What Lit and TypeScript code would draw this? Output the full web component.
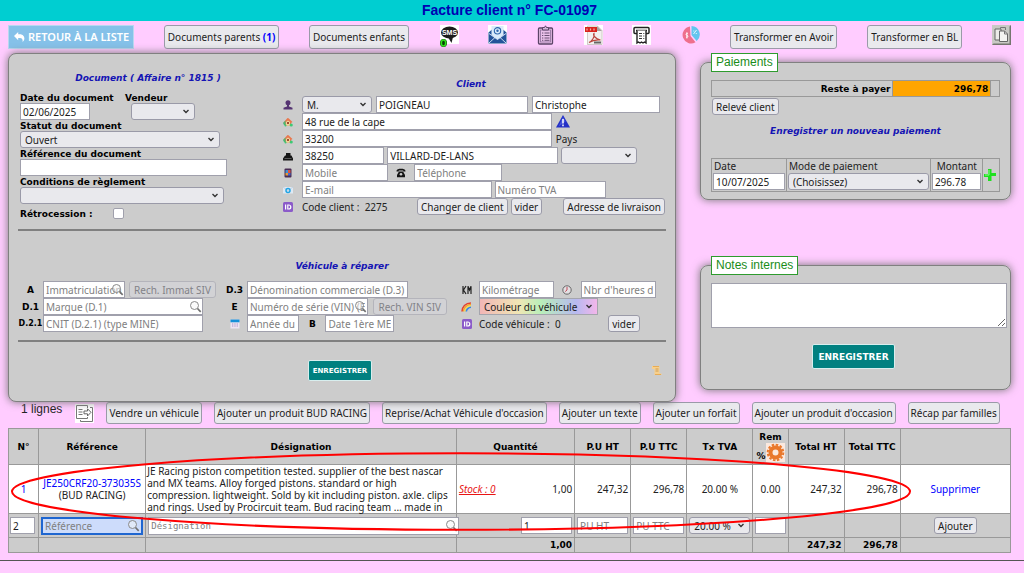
import { LitElement, html, svg, css, nothing } from "lit";
import { customElement, property } from "lit/decorators.js";

const icon = (w: number, h: number, body: unknown, cls = "") =>
  html`<svg class="ico ${cls}" width=${w} height=${h} viewBox="0 0 ${w} ${h}" aria-hidden="true">${body}</svg>`;

const icons = {
  back: () => icon(11, 10, svg`<path d="M0 4L4.2 0v2.3h1.6C9 2.3 10.4 4.600 10.4 6.600c0 1.500-.8 2.600-1.900 3.300.6-2.300-.2-4-2.700-4H4.200v2.300z" fill="#fff"/>`),
  sms: () => icon(20, 22, svg`<rect x="1" y="0" width="19" height="19" fill="#fff"/><ellipse cx="10.500" cy="7.500" rx="8.500" ry="6" fill="#1c1c1c"/><path d="M9 12l3.500 6 1.500-6z" fill="#1c1c1c"/><text x="10.500" y="10" text-anchor="middle" class="sms">SMS</text><ellipse cx="4.500" cy="18" rx="3.500" ry="4" fill="#0b3d05"/><ellipse cx="4.500" cy="18" rx="2.200" ry="3" fill="none" stroke="#2fe61d" stroke-width="1.600"/>`),
  mail: () => icon(19, 19, svg`<rect width="19" height="19" fill="#fff"/><path d="M.5 7.500L4 4.500h11l3.500 3V18.500H.5z" fill="#24549a"/><path d="M3.500 1h12v9l-6 4.500-6-4.500z" fill="#d9ebfa"/><circle cx="9.500" cy="5.800" r="3.200" fill="none" stroke="#2c66ad" stroke-width="1.100"/><circle cx="9.500" cy="5.800" r="1.200" fill="#2c66ad"/><path d="M1 18l6.500-6M18 18l-6.500-6M1 8.500l8.500 6 8.500-6" stroke="#dceafa" stroke-width=".9" fill="none"/>`),
  clip: () => icon(17, 20, svg`<rect x="1.500" y="3" width="14" height="16" rx="1" fill="#eac0ea" stroke="#5c4468" stroke-width="1.300"/><rect x="3.500" y="5" width="10" height="12" fill="none" stroke="#8d6f9b" stroke-width=".8"/><path d="M5.500 5V2.500h2L8.500.8 9.500 2.500h2V5z" fill="#d6b3dc" stroke="#5c4468" stroke-width="1"/><path d="M5 8h1.300M5 10.500h1.300M5 13h1.300M5 15.300h1.300M7.500 8h5M7.500 10.500h5M7.500 13h5M7.500 15.300h5" stroke="#5c4468" stroke-width=".9"/>`),
  pdf: () => icon(19, 20, svg`<rect width="19" height="20" fill="#fff"/><path d="M3.500 1h10l4.500 4.500v14H3.500z" fill="#f2f0ef" stroke="#c6bebc" stroke-width=".8"/><path d="M13 1v5h5z" fill="#a9a2a0"/><rect x="1" y="2" width="12" height="5" fill="#d9241d"/><path d="M3 3.500v2M6.500 3.500v2M10 3.500v2" stroke="#f7b3ae" stroke-width="1.200"/><path d="M5 17.500c3-1.500 6-5.500 5-9-1.500 1 1 5.500 6.500 6.500-4-.500-7.500 0-11.500 2.500z" fill="none" stroke="#b9463e" stroke-width="1.200"/><path d="M10 17.500h7" stroke="#666" stroke-width="2"/>`),
  print: () => icon(19, 20, svg`<rect width="19" height="20" fill="#fff"/><rect x="2" y="2.500" width="15" height="6" rx="1" fill="#fff" stroke="#222" stroke-width="1.500"/><path d="M4 5.500h11" stroke="#222" stroke-width="1.500"/><path d="M5 5.500v12.500l1.500-1 1.500 1 1.500-1 1.500 1 1.500-1L14 18V5.500" fill="#fff" stroke="#222" stroke-width="1.400"/><path d="M7 8.500h3M7 11h3M7 13.500h3M11.300 8.500h1M11.300 11h1M11.300 13.500h1" stroke="#333" stroke-width="1"/>`),
  pie: () => icon(19, 20, svg`<path d="M9 1.500a8.500 8.500 0 1 0 5.500 15.700L9.500 11z" fill="#ee6f8d"/><path d="M10.500 1v9l5.200 6A8.500 8.500 0 0 0 10.500 1z" fill="#63c5ee"/><path d="M6.800 8.500c-2-.6-2.400 1.600-.8 1.900s1.200 2.300-1 1.700M5.900 7.200v6.300" stroke="#fff" stroke-width=".9" fill="none"/><path d="M12.500 9l3-4M12.300 6h1M14.800 8.500h1" stroke="#e4f6fd" stroke-width="1"/>`),
  copy: () => icon(19, 20, svg`<rect width="19" height="20" fill="#c9c9c4"/><path d="M19 0v20H0l1.500-1.500h16V1.500z" fill="#75756f"/><path d="M3 4h6v11H3z" fill="#ecece8" stroke="#666" stroke-width="1"/><path d="M7.500 6h5l3 3v7.500h-8z" fill="#f4f4f1" stroke="#666" stroke-width="1"/><path d="M12.500 6v3h3M8.500 4V2.500h5V5" fill="none" stroke="#777"/>`),
  user: () => icon(10, 10, svg`<circle cx="5" cy="2.800" r="2.500" fill="#553472"/><path d="M4 4.500h2v2l3.500 1.200V9.500H.5V7.700L4 6.500z" fill="#553472"/>`),
  home: () => icon(10, 10, svg`<path d="M.5 5.500L4.500 1l1 .2L9.500 5 8 6v2.500H2.500z" fill="#e9784e"/><path d="M0 6l2.500-2.500v5L1 8z" fill="#48b973"/><path d="M3 5l2-1.500L7 5v3.500H3z" fill="#f0d59a"/><path d="M4 5h2v2H4z" fill="#a44a32"/><circle cx="8.200" cy="8" r="1.600" fill="#3dc974"/><circle cx="2.500" cy="8.500" r="1" fill="#3dc974"/>`),
  city: () => icon(10, 10, svg`<path d="M3 2h4.500v2.500h1L10 7.500v2H0v-2l2-3h1z" fill="#151515"/><path d="M1.500 7.500h7" stroke="#777" stroke-width=".7"/>`),
  mobile: () => icon(10, 10, svg`<rect x="1.500" y=".5" width="7" height="9" rx="1" fill="#4a2c55"/><path d="M2.500 2h2.500v3H2.500z" fill="#3d8fd6"/><path d="M5 2h2.500v3H5z" fill="#e0533a"/><path d="M2.500 5H5v2.500H2.500z" fill="#e79a35"/><path d="M5 5h2.500v2.500H5z" fill="#4467cc"/>`),
  phone: () => icon(10, 10, svg`<path d="M.5 3.500C.5 1 3 .8 5 .8s4.500.2 4.500 2.700H7.200V2.600H2.800v.9z" fill="#151515"/><path d="M3 3.500h4L9 7v2.300H1V7z" fill="#151515"/><circle cx="5" cy="6.300" r="1.300" fill="#ccc"/>`),
  email: () => icon(10, 10, svg`<path d="M0 2h10v6.500H0z" fill="#dfe9f3"/><path d="M0 2l5 3.500L10 2" stroke="#b1c5da" fill="none" stroke-width=".7"/><circle cx="5" cy="5.600" r="2" fill="none" stroke="#22a4e4" stroke-width="1.500"/>`),
  id: () => icon(10, 10, svg`<rect width="10" height="10" rx="1.500" fill="#8b5bc9"/><path d="M2.600 2.500v5M4.800 3v4h1a2 2 0 0 0 0-4z" stroke="#fff" stroke-width="1.200" fill="none"/>`),
  warn: () => icon(14, 13, svg`<path d="M7 0l7 12.500H0z" fill="#2430c6"/><path d="M7 2l2.500 4.500-7 5z" fill="#5b6cf0" opacity=".6"/><path d="M7 4v4.500M7 9.600v1.600" stroke="#fff" stroke-width="1.500"/>`),
  calendar: () => icon(10, 10, svg`<rect x=".5" y=".5" width="9" height="9" fill="#eee6f4"/><rect x=".5" y=".5" width="9" height="2.800" fill="#1690d8"/><path d="M2 5h6M2 7h6" stroke="#a890c5" stroke-width="1" stroke-dasharray="1 .7"/>`),
  km: () => icon(10, 10, svg`<path d="M1 1v8M4 1L1.500 5 4 9M6 9V1.200L7.500 5 9 1.200V9" stroke="#222" stroke-width="1.200" fill="none"/>`),
  clock: () => icon(10, 10, svg`<circle cx="5" cy="5" r="4.200" fill="#e2dfe2" stroke="#666" stroke-width="1"/><path d="M5 2v3L3.200 6.600" stroke="#c13a4a" stroke-width=".9" fill="none"/>`),
  rainbow: () => icon(11, 10, svg`<path d="M1 9.500C1 5 4.500 1 10 1" stroke="#e4402f" stroke-width="1.500" fill="none"/><path d="M2.500 9.500C2.500 6 5.500 2.500 10 2.500" stroke="#f6a12d" stroke-width="1.500" fill="none"/><path d="M4 9.500C4 7 6.500 4 10 4" stroke="#f7e04a" stroke-width="1.300" fill="none"/><path d="M5.300 9.500C5.500 7.500 7.500 5.300 10 5.300" stroke="#3a86e8" stroke-width="1.600" fill="none"/>`),
  scroll: () => icon(10, 11, svg`<path d="M0 1h7.500v7.500H9.500V10H2.500V4H0z" fill="#f8d08c"/><path d="M3.500 4h3M3.500 6h3" stroke="#c0904c" stroke-width=".8"/><path d="M1 1.500h6M3 9.500h6" stroke="#e8ac55" stroke-width="1"/>`),
  lens: () => icon(13, 13, svg`<circle cx="5.500" cy="5.500" r="4" fill="#f6f6f6" fill-opacity=".5" stroke="#8a8a8a" stroke-width="1"/><path d="M8.500 8.500l3.200 3.300" stroke="#707070" stroke-width="1.700"/>`, "lens"),
  plus: () => icon(12, 12, svg`<path d="M4 0h3.500v4H12v3H7.500v5H4V8H0V5h4z" fill="#1fe01f"/><path d="M5 1v5H1" stroke="#8df58d" fill="none"/>`),
  lines: () => icon(19, 19, svg`<rect width="19" height="19" fill="#fff"/><path d="M12.500 4V1.500H1.500v13h11V13" fill="none" stroke="#777" stroke-width="1"/><path d="M15 3.500h2.500V17.500H5.500V16" fill="none" stroke="#777" stroke-width="1"/><path d="M3.500 5.500h4M3.500 8h4M3.500 10.500h4" stroke="#777" stroke-width="1"/><path d="M9 7h3.500V4.800L16 8.300 12.500 12V9.800H9z" fill="#fff" stroke="#666" stroke-width="1"/>`),
  gear: () => icon(19, 19, svg`<rect width="19" height="19" fill="#fbe9df"/><circle cx="9.500" cy="9.500" r="5" fill="none" stroke="#e9782c" stroke-width="4"/><circle cx="9.500" cy="9.500" r="7.800" fill="none" stroke="#e9782c" stroke-width="2" stroke-dasharray="2.500 1.584"/>`),
};

const field = (label: string, o: { value?: string; ph?: string; cls?: string } = {}) =>
  html`<input type="text" class=${o.cls ?? ""} aria-label=${label} .value=${o.value ?? ""} placeholder=${o.ph ?? nothing} />`;

const search = (label: string, ph: string, cls = "") =>
  html`<span class="search ${cls}">${field(label, { ph })}${icons.lens()}</span>`;

const pick = (label: string, value = "", cls = "") =>
  html`<select class=${cls} aria-label=${label}><option>${value}</option></select>`;

@customElement("app-root")
export class AppRoot extends LitElement {
  @property() numero = "FC-01097";

  static styles = css`
    :host {
      display: block;
      min-height: 100vh;
      background: #ffccff;
      color: #222;
      font: 10px/12px "Noto Sans", sans-serif;
    }
    * { box-sizing: border-box; }
    h1, h2 { margin: 0; }
    .ico { display: block; flex: none; }
    .sms { font: bold 7px "Liberation Sans", sans-serif; fill: #fff; }
    header { background: #00ced1; height: 21px; }
    h1 {
      font: bold 14px/20px "Liberation Sans", Arial, sans-serif;
      color: #0000b3;
      text-align: center;
      padding-right: 5px;
    }
    h2 {
      font: italic bold 9px/12px "DejaVu Sans", Verdana, sans-serif;
      color: #1414b4;
      text-align: center;
    }
    button, input, select, textarea {
      font: inherit;
      color: #1c1c1c;
      margin: 0;
      min-width: 0;
    }
    button {
      background: #e9e9ed;
      border: 1px solid #9a9aa8;
      border-radius: 3px;
      padding: 0 3px;
      height: 17px;
      white-space: nowrap;
    }
    button:disabled { background: #d2d2d5; color: #828288; border-color: #b4b4bb; }
    input, textarea { background: #fff; border: 1px solid #a0a0ac; padding: 0 2px; }
    input[type="text"] { height: 17px; width: 100%; }
    input::placeholder { color: #808080; opacity: 1; }
    select {
      appearance: none;
      height: 17px;
      width: 100%;
      border: 1px solid #9a9aa8;
      border-radius: 3px;
      padding: 0 16px 0 4px;
      background: #e9e9ed
        url("data:image/svg+xml,%3Csvg xmlns='http://www.w3.org/2000/svg' width='6' height='5'%3E%3Cpath d='M.5 1L3 3.500 5.500 1' fill='none' stroke='%23333' stroke-width='1.400'/%3E%3C/svg%3E")
        no-repeat right 5px center;
    }
    nav, .lines { display: flex; align-items: center; }
    nav { justify-content: space-between; align-items: flex-start; padding: 4px 13px 4px 8px; }
    nav button { height: 24px; }
    nav b { color: #0000ff; }
    .iconlink { display: block; }
    .back {
      display: flex;
      align-items: center;
      gap: 3px;
      height: 24px;
      padding: 0 4px 0 5px;
      background: #85c1e9;
      border: 1px solid #b8d8f0;
      color: #fff;
      font-size: 11px;
      font-weight: 600;
      text-decoration: none;
      white-space: nowrap;
    }
    .main {
      display: grid;
      grid-template-columns: 668fr 311fr;
      gap: 24px;
      padding: 0 13px 0 8px;
      align-items: start;
    }
    .panel, fieldset {
      background: #ccc;
      border: 1px solid #808080;
      border-radius: 8px;
      box-shadow: 0 0 8px #777;
    }
    .panel { position: relative; padding: 0 9px 20px; }
    .top { display: grid; grid-template-columns: 264fr 384fr; height: 175px; }
    .doc { padding: 18px 0 0 2px; }
    .doc h2 { padding-right: 6px; margin-bottom: 8px; }
    .doc label { display: block; font: bold 9px/12px "DejaVu Sans", Verdana, sans-serif; color: #000; height: 11px; white-space: nowrap; }
    .two { display: grid; grid-template-columns: 105px 1fr; }
    .two select { width: 64px; margin-left: 6px; }
    .doc .date { width: 70px; }
    .doc .w200 { width: 200px; display: block; }
    .doc .w204 { width: 204px; display: block; }
    .doc .w207 { width: 207px; display: block; }
    .retro { display: flex; align-items: center; gap: 20px; padding-top: 4px; }
    input[type="checkbox"] { appearance: none; width: 11px; height: 11px; border-radius: 2px; padding: 0; }
    .client { padding: 24px 1px 0 0; }
    .client h2 { margin: 0 5px 6px 0; }
    .row { display: grid; grid-template-columns: 19px 1fr; align-items: center; height: 17px; padding-left: 1px; }
    .r { display: grid; align-items: center; gap: 3px; }
    .r1 { grid-template-columns: 70fr 152fr 128fr; gap: 4px; padding-right: 5px; }
    .r2 { grid-template-columns: 249fr 109fr; gap: 4px; }
    .r4 { grid-template-columns: 82fr 170fr 76fr 25fr; }
    .r5 { grid-template-columns: 86fr 26fr 87fr 163fr; gap: 0; }
    .r5 .ico { justify-self: center; }
    .r6 { grid-template-columns: 189fr 111fr 56fr; }
    .r7 { grid-template-columns: 112px auto auto 1fr auto; }
    hr { border: 0; border-top: 2px solid #808080; margin: 0; }
    .veh { display: grid; grid-template-columns: 204fr 232fr 212fr; padding: 9px 0 8px; }
    .veh-title { padding-top: 29px; }
    .vrow { display: grid; grid-template-columns: 25px 1fr; align-items: center; height: 17px; }
    .vrow > .ico { justify-self: center; }
    .tag { font: bold 9px/12px "DejaVu Sans", Verdana, sans-serif; color: #000; text-align: center; white-space: nowrap; }
    .tiny { font-size: 8px; }
    .va { grid-template-columns: 82fr 87fr 2fr; gap: 4px; }
    .vb { grid-template-columns: 160fr 15fr; gap: 4px; }
    .vc { grid-template-columns: 160fr 41fr; gap: 5px; }
    .vd { grid-template-columns: 120fr 74fr 2fr; gap: 5px; }
    .ve { grid-template-columns: 52fr 26fr 68fr 60fr; gap: 0; }
    .vf { grid-template-columns: 75fr 26fr 75fr 10fr; gap: 0; }
    .vf .ico { justify-self: center; }
    .vg { grid-template-columns: 118fr 68fr; gap: 0; }
    .vh { grid-template-columns: 128fr auto 26fr; gap: 0; }
    .search { display: block; position: relative; }
    .search input { display: block; }
    .lens { position: absolute; right: 1px; top: 2px; }
    .color {
      border: 1px solid #a5a5ad;
      border-radius: 0;
      background-image:
        url("data:image/svg+xml,%3Csvg xmlns='http://www.w3.org/2000/svg' width='6' height='5'%3E%3Cpath d='M.5 1L3 3.500 5.500 1' fill='none' stroke='%23333' stroke-width='1.400'/%3E%3C/svg%3E"),
        linear-gradient(90deg, #f2b6b6, #f0e6b4 33%, #b9efb9 52%, #b7b9f0 82%, #f3b6ea);
      background-position: right 5px center, 0 0;
      background-repeat: no-repeat;
    }
    .save {
      background: #008080;
      border: 1px solid #d8eeee;
      border-radius: 2px;
      color: #fff;
      font: bold 7px/12px "DejaVu Sans", Verdana, sans-serif;
    }
    .foot { display: grid; grid-template-columns: 1fr auto 1fr; align-items: center; padding: 18px 4px 0 0; }
    .foot .save { height: 21px; padding: 0 4px; }
    .foot .ico { justify-self: end; }
    fieldset { margin: 0; min-width: 0; padding: 8px 9px 7px 10px; }
    fieldset + fieldset { margin-top: 56px; padding: 8px 14px 20px 10px; }
    legend {
      font: 12px/17px "Liberation Sans", Arial, sans-serif;
      color: #1a8c1a;
      background: #fff;
      border: 1px solid #2e9b2e;
      padding: 0 4px;
    }
    textarea { display: block; width: calc(100% + 11px); height: 45px; resize: vertical; }
    .big { display: block; height: 25px; margin: 16px auto 0; font-size: 9px; padding: 0 5px; }
    table { border-collapse: collapse; table-layout: fixed; width: 100%; }
    .pay { width: calc(100% - 1px); }
    .pay td, .pay th { border: 1px solid #999; padding: 0 2px; }
    .rest th { font: bold 9px/14px "DejaVu Sans", Verdana, sans-serif; color: #000; text-align: right; height: 16px; }
    .rest .due { background: #ffa500; }
    .releve { margin: 1px; }
    fieldset h2 { padding: 9px 1px 21px 0; }
    .new td { height: 33px; vertical-align: top; padding: 1px; }
    .new td:last-child { vertical-align: middle; padding: 0; }
    .new label { display: block; padding-left: 1px; line-height: 13px; }
    .new .mt { text-align: center; }
    .plus { border: 0; background: none; padding: 0 0 0 1px; height: 12px; display: block; }
    .lines { gap: 12px; padding: 0 13px 4px 21px; }
    .lines button { height: 22px; padding: 0 2px; }
    .count { font: 12px/14px "Liberation Sans", Arial, sans-serif; align-self: flex-start; white-space: nowrap; padding-right: 1px; }
    .items-box { position: relative; margin: 0 13px 0 8px; }
    .items th, .items td { border: 1px solid #999; padding: 0 2px; font-weight: normal; }
    .items { background: #ccc; }
    .items thead th { font: bold 9px/12px "DejaVu Sans", Verdana, sans-serif; color: #000; height: 36px; padding: 0; }
    .items tbody td { background: #fff; height: 49px; }
    .num { text-align: right; }
    .mid { text-align: center; }
    .items .desc { line-height: 12px; padding: 0 1px; }
    .ref { white-space: nowrap; }
    a { color: #0000ff; text-decoration: none; }
    .stock { display: flex; justify-content: space-between; }
    .stock a { color: #e81414; font-style: italic; text-decoration: underline; }
    .add td { height: 24px; padding: 0 2px; }
    .add td:first-child { padding: 0 3px 0 1px; }
    .add .search input { height: 18px; }
    .focus input { background: #cddcfb; border: 2px solid #1f66d0; }
    .focus .lens { right: 3px; }
    .wide { width: calc(100% + 5px); }
    .mono input { font: 9px/12px "DejaVu Sans Mono", monospace; }
    .add .half { display: block; width: 51px; margin-left: auto; }
    .items .sum th { font: bold 9px/12px "DejaVu Sans", Verdana, sans-serif; color: #000; text-align: right; height: 15px; }
    .rem { display: flex; align-items: flex-end; justify-content: center; }
    .ring { position: absolute; left: 0; top: 0; width: 100%; height: 100%; overflow: visible; pointer-events: none; }
    .end { border-top: 1px solid #555; margin-top: 7px; }
    .c1 { width: 3%; } .c2 { width: 10.700%; } .c3 { width: 31%; } .c4 { width: 11.800%; }
    .c5 { width: 5.600%; } .c6 { width: 5.600%; } .c7 { width: 6.600%; } .c8 { width: 3.500%; }
    .c9 { width: 5.600%; } .c10 { width: 5.600%; } .c11 { width: 11%; }
    .p1 { width: 26%; } .p2 { width: 50%; } .p3 { width: 18%; } .p4 { width: 6%; }
    .q1 { width: 63%; } .q2 { width: 34%; } .q3 { width: 3%; }
  `;

  private documentBlock() {
    return html`<section class="doc">
      <h2>Document ( Affaire n° 1815 )</h2>
      <div class="two"><label for="date">Date du document</label><label for="vendeur">Vendeur</label></div>
      <div class="two">
        <input id="date" type="text" class="date" value="02/06/2025" />
        <select id="vendeur"><option></option></select>
      </div>
      <label for="statut">Statut du document</label>
      <select id="statut" class="w200"><option>Ouvert</option></select>
      <label for="refdoc">Référence du document</label>
      <input id="refdoc" type="text" class="w207" />
      <label for="cond">Conditions de règlement</label>
      <select id="cond" class="w204"><option></option></select>
      <div class="retro"><label for="retro">Rétrocession :</label><input id="retro" type="checkbox" /></div>
    </section>`;
  }

  private clientBlock() {
    return html`<section class="client">
      <h2>Client</h2>
      <div class="row">${icons.user()}<div class="r r1">${pick("Civilité", "M.")}${field("Nom", { value: "POIGNEAU" })}${field("Prénom", { value: "Christophe" })}</div></div>
      <div class="row">${icons.home()}<div class="r r2">${field("Adresse", { value: "48 rue de la cape" })}${icons.warn()}</div></div>
      <div class="row">${icons.home()}<div class="r r2">${field("Adresse 2", { value: "33200" })}<label for="pays">Pays</label></div></div>
      <div class="row">${icons.city()}<div class="r r4">${field("Code postal", { value: "38250" })}${field("Ville", { value: "VILLARD-DE-LANS" })}<select id="pays"><option></option></select></div></div>
      <div class="row">${icons.mobile()}<div class="r r5">${field("Mobile", { ph: "Mobile" })}${icons.phone()}${field("Téléphone", { ph: "Téléphone" })}</div></div>
      <div class="row">${icons.email()}<div class="r r6">${field("E-mail", { ph: "E-mail" })}${field("Numéro TVA", { ph: "Numéro TVA" })}</div></div>
      <div class="row">${icons.id()}<div class="r r7"><span>Code client :&nbsp; 2275</span><button>Changer de client</button><button>vider</button><span></span><button>Adresse de livraison</button></div></div>
    </section>`;
  }

  private vehicleBlock() {
    return html`<h2 class="veh-title">Véhicule à réparer</h2>
      <section class="veh">
        <div>
          <div class="vrow"><span class="tag">A</span><div class="r va">${search("Immatriculation", "Immatriculation (A)")}<button disabled>Rech. Immat SIV</button></div></div>
          <div class="vrow"><span class="tag">D.1</span><div class="r vb">${search("Marque", "Marque (D.1)")}</div></div>
          <div class="vrow"><span class="tag tiny">D.2.1</span><div class="r vb">${field("CNIT", { ph: "CNIT (D.2.1) (type MINE)" })}</div></div>
        </div>
        <div>
          <div class="vrow"><span class="tag">D.3</span><div class="r vc">${field("Dénomination commerciale", { ph: "Dénomination commerciale (D.3)" })}</div></div>
          <div class="vrow"><span class="tag">E</span><div class="r vd">${search("Numéro de série", "Numéro de série (VIN) (E)")}<button disabled>Rech. VIN SIV</button></div></div>
          <div class="vrow">${icons.calendar()}<div class="r ve">${field("Année du modèle", { ph: "Année du modèle" })}<span class="tag">B</span>${field("Date 1ère MEC", { ph: "Date 1ère MEC" })}</div></div>
        </div>
        <div>
          <div class="vrow">${icons.km()}<div class="r vf">${field("Kilométrage", { ph: "Kilométrage" })}${icons.clock()}${field("Nbr d'heures", { ph: "Nbr d'heures de marche" })}</div></div>
          <div class="vrow">${icons.rainbow()}<div class="r vg">${pick("Couleur", "Couleur du véhicule", "color")}</div></div>
          <div class="vrow">${icons.id()}<div class="r vh"><span>Code véhicule :&nbsp; 0</span><button>vider</button></div></div>
        </div>
      </section>`;
  }

  private sideBlock() {
    return html`<aside>
      <fieldset>
        <legend>Paiements</legend>
        <table class="pay rest">
          <colgroup><col class="q1" /><col class="q2" /><col class="q3" /></colgroup>
          <tr><th scope="row">Reste à payer</th><th class="due">296,78</th><td></td></tr>
        </table>
        <button class="releve">Relevé client</button>
        <h2>Enregistrer un nouveau paiement</h2>
        <table class="pay new">
          <colgroup><col class="p1" /><col class="p2" /><col class="p3" /><col class="p4" /></colgroup>
          <tr>
            <td><label for="pd">Date</label><input id="pd" type="text" value="10/07/2025" /></td>
            <td><label for="pm">Mode de paiement</label><select id="pm"><option>(Choisissez)</option></select></td>
            <td><label for="pa" class="mt">Montant</label><input id="pa" type="text" value="296.78" /></td>
            <td><button class="plus" aria-label="Ajouter le paiement">${icons.plus()}</button></td>
          </tr>
        </table>
      </fieldset>
      <fieldset>
        <legend>Notes internes</legend>
        <textarea aria-label="Notes internes"></textarea>
        <button class="save big">ENREGISTRER</button>
      </fieldset>
    </aside>`;
  }

  private itemsBlock() {
    const heads = ["N°", "Référence", "Désignation", "Quantité", "P.U HT", "P.U TTC", "Tx TVA"];
    return html`<div class="items-box">
      <table class="items">
        <colgroup>${heads.concat("", "", "", "").map((_, i) => html`<col class="c${i + 1}" />`)}</colgroup>
        <thead><tr>
          ${heads.map((h) => html`<th scope="col">${h}</th>`)}
          <th scope="col">Rem<span class="rem">%${icons.gear()}</span></th>
          <th scope="col">Total HT</th><th scope="col">Total TTC</th><td></td>
        </tr></thead>
        <tbody><tr>
          <td class="mid"><a href="#1">1</a></td>
          <td class="mid ref"><a href="#ref">JE250CRF20-373035S</a><br />(BUD RACING)</td>
          <td class="desc">JE Racing piston competition tested. supplier of the best nascar and MX teams. Alloy forged pistons. standard or high compression. lightweight. Sold by kit including piston. axle. clips and rings. Used by Procircuit team. Bud racing team ... made in</td>
          <td><span class="stock"><a href="#stock">Stock : 0</a><span>1,00</span></span></td>
          <td class="num">247,32</td><td class="num">296,78</td>
          <td class="mid">20.00 %</td><td class="mid">0.00</td>
          <td class="num">247,32</td><td class="num">296,78</td>
          <td class="mid"><a href="#del">Supprimer</a></td>
        </tr></tbody>
        <tfoot>
          <tr class="add">
            <td>${field("N°", { value: "2" })}</td>
            <td>${search("Référence", "Référence", "focus")}</td>
            <td>${search("Désignation", "Désignation", "mono wide")}</td>
            <td>${field("Quantité", { value: "1", cls: "half" })}</td>
            <td>${field("PU HT", { ph: "PU HT" })}</td>
            <td>${field("PU TTC", { ph: "PU TTC" })}</td>
            <td>${pick("Tx TVA", "20.00 %")}</td>
            <td>${field("Remise")}</td>
            <td></td><td></td>
            <td class="mid"><button>Ajouter</button></td>
          </tr>
          <tr class="sum"><td></td><td></td><td></td><th>1,00</th><td></td><td></td><td></td><td></td><th>247,32</th><th>296,78</th><td></td></tr>
        </tfoot>
      </table>
      <svg class="ring" viewBox="0 0 1003 124" preserveAspectRatio="none" aria-hidden="true">
        <ellipse cx="453" cy="63" rx="449" ry="38" fill="none" stroke="#f00" stroke-width="2" />
      </svg>
    </div>`;
  }

  render() {
    return html`
      <header><h1>Facture client n° ${this.numero}</h1></header>
      <nav>
        <a class="back" href="#liste">${icons.back()}RETOUR À LA LISTE</a>
        <button>Documents parents <b>(1)</b></button>
        <button>Documents enfants</button>
        <a class="iconlink" href="#sms" aria-label="SMS">${icons.sms()}</a>
        <a class="iconlink" href="#mail" aria-label="E-mail">${icons.mail()}</a>
        <a class="iconlink" href="#notes" aria-label="Notes">${icons.clip()}</a>
        <a class="iconlink" href="#pdf" aria-label="PDF">${icons.pdf()}</a>
        <a class="iconlink" href="#ticket" aria-label="Ticket">${icons.print()}</a>
        <a class="iconlink" href="#marge" aria-label="Marge">${icons.pie()}</a>
        <button>Transformer en Avoir</button>
        <button>Transformer en BL</button>
        <a class="iconlink" href="#copie" aria-label="Dupliquer">${icons.copy()}</a>
      </nav>
      <div class="main">
        <div class="panel">
          <div class="top">${this.documentBlock()}${this.clientBlock()}</div>
          <hr />
          ${this.vehicleBlock()}
          <hr />
          <div class="foot"><span></span><button class="save">ENREGISTRER</button>${icons.scroll()}</div>
        </div>
        ${this.sideBlock()}
      </div>
      <div class="lines">
        <span class="count">1 lignes</span>${icons.lines()}
        ${["Vendre un véhicule", "Ajouter un produit BUD RACING", "Reprise/Achat Véhicule d'occasion", "Ajouter un texte", "Ajouter un forfait", "Ajouter un produit d'occasion", "Récap par familles"].map((t) => html`<button>${t}</button>`)}
      </div>
      ${this.itemsBlock()}
      <div class="end"></div>
    `;
  }
}
